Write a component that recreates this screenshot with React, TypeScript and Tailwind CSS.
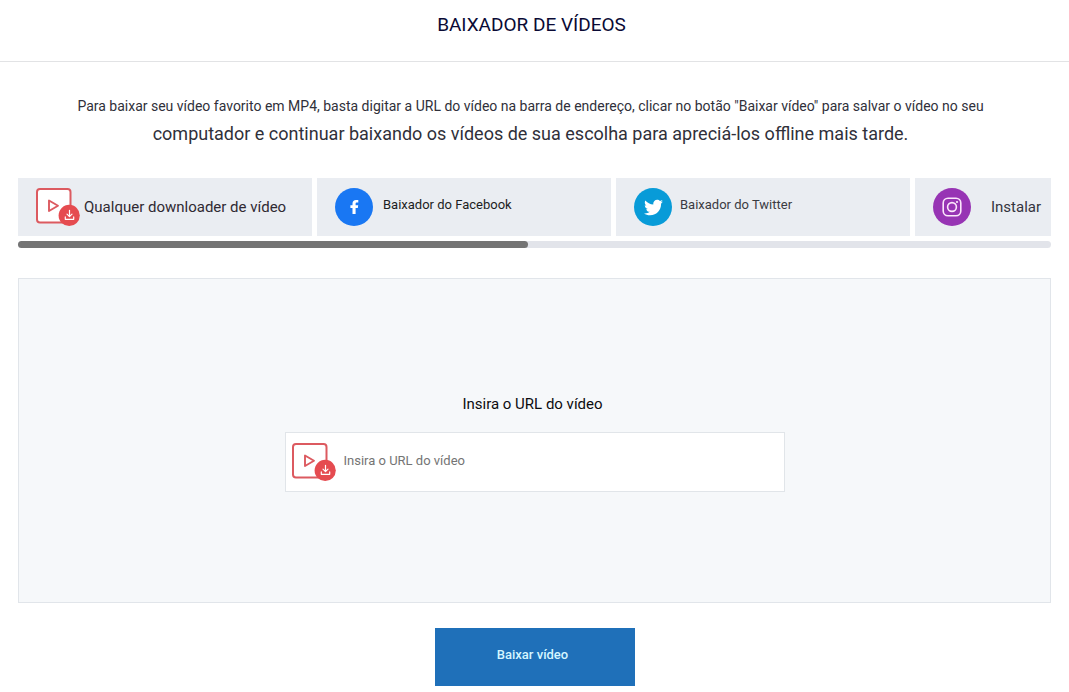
import type { ReactNode } from "react";
import { FaTwitter } from "react-icons/fa";

function VideoDownloadIcon() {
  return (
    <svg width="44" height="38" viewBox="0 0 44 38" fill="none" className="shrink-0" aria-hidden="true">
      <rect x="1" y="1" width="33.5" height="33.5" rx="3" fill="#fff" stroke="#dc5a60" strokeWidth="2" />
      <path d="M13 12.5v10.5l9-5.2z" stroke="#dc5a60" strokeWidth="1.9" strokeLinejoin="round" />
      <circle cx="33.2" cy="27.4" r="10.6" fill="#e54b50" />
      <path
        d="M33.5 22.3v6.2m-2.5-2.4 2.5 2.5 2.5-2.5M29.3 28.9v2.4h8.4v-2.4"
        stroke="#fff"
        strokeWidth="1.2"
        strokeLinecap="round"
        strokeLinejoin="round"
      />
    </svg>
  );
}

function FacebookIcon() {
  return (
    <svg width="9" height="14" viewBox="0 0 9 14" fill="#fff" aria-hidden="true">
      <path d="M2.5 14V8H.4V5.3h2.1V3.7C2.5 1.3 3.8 0 6 0h2.3v2.6H7C6 2.6 5.6 3 5.6 3.9v1.4h2.6L7.8 8H5.6v6z" />
    </svg>
  );
}

function InstagramIcon() {
  return (
    <svg width="20" height="20" viewBox="0 0 20 20" fill="none" stroke="#fbe6fb" strokeWidth="1.6" aria-hidden="true">
      <rect x="1.2" y="1.2" width="17.6" height="17.6" rx="4.8" />
      <circle cx="10" cy="10" r="4.4" />
      <circle cx="15" cy="5" r="1.1" fill="#fbe6fb" stroke="none" />
    </svg>
  );
}

interface CardProps {
  icon: ReactNode;
  label: string;
  className: string;
  labelClassName?: string;
}

function SourceCard({ icon, label, className, labelClassName = "" }: CardProps) {
  return (
    <a
      href="#"
      className={`flex h-[58px] w-[294px] shrink-0 items-center bg-[#eaedf2] pl-[18px] whitespace-nowrap ${className}`}
    >
      {icon}
      <span className={labelClassName}>{label}</span>
    </a>
  );
}

export default function App() {
  return (
    <div className="bg-white pb-1.5 font-['Roboto',sans-serif]">
      <header className="border-b border-[#e2e3e5] pt-[11px] pb-[22px] text-center">
        <h1 className="pr-1.5 text-[19px] leading-7 text-[#0a0a35]">BAIXADOR DE VÍDEOS</h1>
      </header>

      <main className="px-[18px]">
        {/* Intro */}
        <p className="pt-[30px] pr-2 text-center text-[#30303a]">
          <span className="block text-[14px] leading-7">
            Para baixar seu vídeo favorito em MP4, basta digitar a URL do vídeo na barra de endereço, clicar no botão
            "Baixar vídeo" para salvar o vídeo no seu
          </span>
          <span className="block text-[18px] leading-7">
            computador e continuar baixando os vídeos de sua escolha para apreciá-los offline mais tarde.
          </span>
        </p>

        {/* Source tabs */}
        <nav className="mt-[30px] flex gap-[5px] overflow-hidden">
          <SourceCard
            icon={<VideoDownloadIcon />}
            label="Qualquer downloader de vídeo"
            className="gap-1 text-[15px] text-[#302a33]"
          />
          <SourceCard
            icon={
              <span className="flex size-[38px] shrink-0 items-center justify-center rounded-full bg-[#1977f3]">
                <FacebookIcon />
              </span>
            }
            label="Baixador do Facebook"
            className="gap-2.5 text-[13px] text-[#1c1d22]"
            labelClassName="pb-1"
          />
          <SourceCard
            icon={
              <span className="flex size-[38px] shrink-0 items-center justify-center rounded-full bg-[#089bd8]">
                <FaTwitter size={19} color="#fff" />
              </span>
            }
            label="Baixador do Twitter"
            className="gap-2 text-[13px] text-[#3a3b42]"
            labelClassName="pb-1"
          />
          <SourceCard
            icon={
              <span className="flex size-[38px] shrink-0 items-center justify-center rounded-full bg-[#9734b4]">
                <InstagramIcon />
              </span>
            }
            label="Instalar"
            className="gap-5 text-[15px] text-[#34343e]"
          />
        </nav>
        <div className="mt-[5px] h-[7px] rounded-full bg-[#e2e4ea]">
          <div className="h-full w-[49.4%] rounded-full bg-[#747474]" />
        </div>

        {/* URL form */}
        <form onSubmit={(e) => e.preventDefault()}>
          <div className="mt-[30px] flex flex-col items-center border border-[#e1e5ea] bg-[#f6f8fa] pt-[113px] pb-[110px]">
            <label htmlFor="video-url" className="pr-1 text-[15px] leading-6 text-[#0c0c10]">
              Insira o URL do vídeo
            </label>
            <div className="mt-4 flex h-[60px] w-full max-w-[500px] items-center gap-2 border border-[#e1e5e9] bg-white pl-1.5">
              <VideoDownloadIcon />
              <input
                id="video-url"
                type="text"
                placeholder="Insira o URL do vídeo"
                className="h-full min-w-0 flex-1 pb-1 text-[13px] text-[#333] outline-none placeholder:text-[#747474]"
              />
            </div>
          </div>
          <button
            type="submit"
            className="mx-auto mt-[25px] flex h-[58px] w-[200px] items-center justify-center bg-[#1f70b9] pr-1 pb-1 text-[13px] font-medium text-[#d5f6ff]"
          >
            Baixar vídeo
          </button>
        </form>
      </main>
    </div>
  );
}
